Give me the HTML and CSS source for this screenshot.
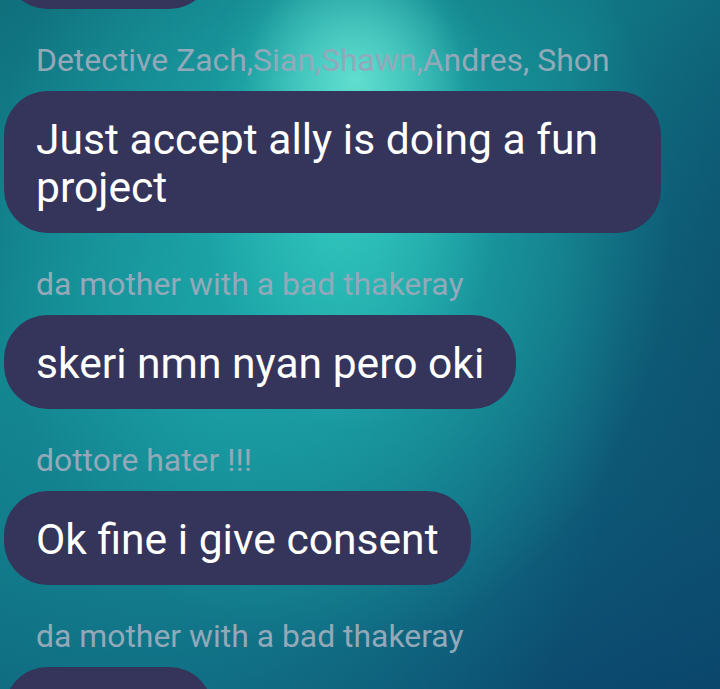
FILE: index.html
```html
<!DOCTYPE html>
<html lang="en">
<head>
<meta charset="utf-8">
<title>Chat</title>
<link rel="stylesheet" href="styles.css">
</head>
<body>
<main class="chat">
  <div class="msg msg-first">
    <div class="bubble bubble-cut">&nbsp;</div>
  </div>
  <div class="msg">
    <div class="name">Detective Zach,Sian,Shawn,Andres, Shon</div>
    <div class="bubble">Just accept ally is doing a fun project</div>
  </div>
  <div class="msg">
    <div class="name">da mother with a bad thakeray</div>
    <div class="bubble">skeri nmn nyan pero oki</div>
  </div>
  <div class="msg">
    <div class="name">dottore hater !!!</div>
    <div class="bubble">Ok fine i give consent</div>
  </div>
  <div class="msg">
    <div class="name">da mother with a bad thakeray</div>
    <div class="bubble bubble-cut">&nbsp;</div>
  </div>
</main>
</body>
</html>
```

FILE: styles.css
```css
html, body {
  margin: 0;
  padding: 0;
}

body {
  width: 720px;
  height: 689px;
  overflow: hidden;
  font-family: Roboto, "Noto Sans", "Liberation Sans", sans-serif;
  background:
    radial-gradient(ellipse 110px 120px at 355px 80px, rgba(110, 232, 214, 0.8), rgba(110, 232, 214, 0)),
    radial-gradient(ellipse 150px 260px at 350px 170px, rgba(60, 210, 198, 0.7), rgba(60, 210, 198, 0)),
    radial-gradient(ellipse 340px 420px at 330px 230px, rgba(32, 178, 176, 0.9), rgba(32, 178, 176, 0)),
    radial-gradient(ellipse 420px 520px at 200px 380px, rgba(22, 150, 158, 0.8), rgba(22, 150, 158, 0)),
    radial-gradient(ellipse 200px 520px at 760px 260px, rgba(12, 78, 108, 0.75), rgba(12, 78, 108, 0)),
    linear-gradient(150deg, #0f6b78 0%, #117a86 35%, #0e5c78 70%, #0b456c 100%);
}

.chat {
  display: flex;
  flex-direction: column;
  align-items: flex-start;
  padding-left: 4px;
}

.msg {
  display: flex;
  flex-direction: column;
  align-items: flex-start;
  margin-top: 33px;
}

.msg-first {
  margin-top: -85px;
}

.name {
  padding-left: 32px;
  font-size: 31.9px;
  line-height: 37px;
  color: #93a9ba;
  white-space: nowrap;
}

.bubble {
  box-sizing: border-box;
  max-width: 657px;
  margin-top: 12px;
  padding: 24px 32px 22px;
  border-radius: 44px;
  background: #35345a;
  color: #ffffff;
  font-size: 42.6px;
  line-height: 48px;
}

.msg-first .bubble {
  margin-top: 0;
}

.bubble-cut {
  width: 209px;
}
```
